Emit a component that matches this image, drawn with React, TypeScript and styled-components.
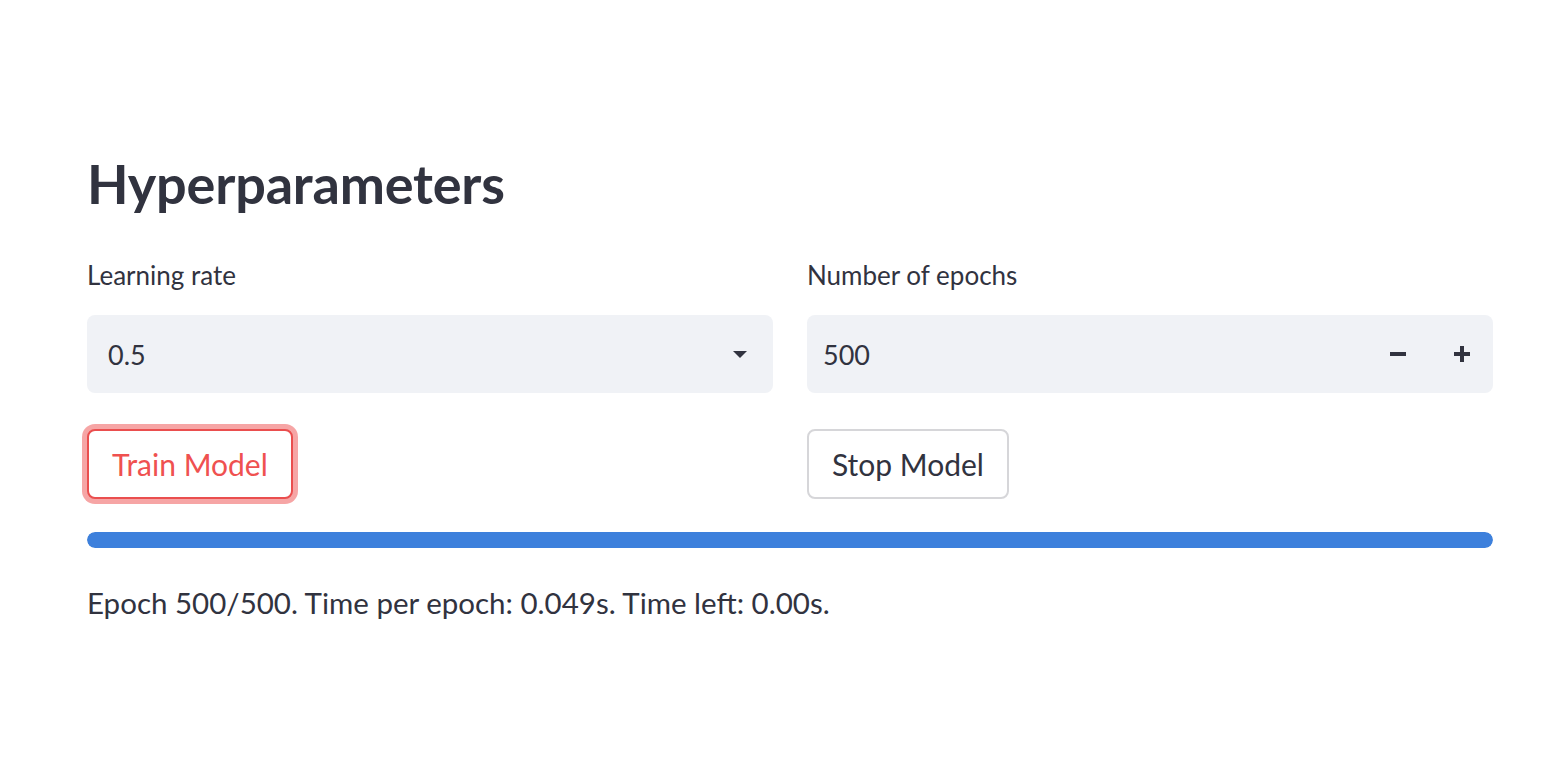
import React from "react";
import styled, { createGlobalStyle } from "styled-components";

const Global = createGlobalStyle`
  html, body { margin: 0; padding: 0; background: #ffffff; }
  body { font-family: Lato, "Noto Sans", sans-serif; color: #31333f; }
  * { box-sizing: border-box; }
`;

const Page = styled.main`
  width: 1566px;
  height: 762px;
  padding: 152px 73px 0 87px;
`;

const Heading = styled.h3`
  margin: 0;
  font-size: 54px;
  font-weight: 700;
  line-height: 64px;
  color: #31333f;
  letter-spacing: -0.2px;
`;

const Columns = styled.div`
  display: grid;
  grid-template-columns: 686px 686px;
  column-gap: 34px;
  margin-top: 43px;
`;

const Field = styled.div`
  display: flex;
  flex-direction: column;
`;

const Label = styled.label`
  font-size: 26px;
  line-height: 32px;
  height: 32px;
  margin-bottom: 24px;
  color: #31333f;
`;

const InputBox = styled.div<{ $padLeft: number; $padRight: number }>`
  height: 78px;
  background: #f0f2f6;
  border-radius: 8px;
  display: flex;
  align-items: center;
  padding-left: ${(p) => p.$padLeft}px;
  padding-right: ${(p) => p.$padRight}px;
  font-size: 27px;
  color: #31333f;
`;

const Value = styled.span`
  flex: 1;
`;

const Caret = styled.span`
  width: 0;
  height: 0;
  border-left: 7px solid transparent;
  border-right: 7px solid transparent;
  border-top: 7px solid #31333f;
`;

const StepButton = styled.span`
  width: 16px;
  height: 16px;
  display: flex;
  align-items: center;
  justify-content: center;
  margin-left: 48px;
`;

const ButtonRow = styled.div`
  margin-top: 36px;
  height: 70px;
`;

const Button = styled.button<{ $primary?: boolean }>`
  height: 70px;
  padding: 0 23px;
  border-radius: 8px;
  background: #ffffff;
  font-family: inherit;
  font-size: 30px;
  cursor: pointer;
  color: ${(p) => (p.$primary ? "#ef5150" : "#31333f")};
  border: ${(p) => (p.$primary ? "2px solid #ea4e4e" : "2px solid #d6d6d9")};
  box-shadow: ${(p) => (p.$primary ? "0 0 0 5px rgba(245, 160, 160, 0.95)" : "none")};
`;

const Progress = styled.div`
  margin-top: 33px;
  height: 16px;
  width: 1406px;
  border-radius: 8px;
  background: #f0f2f6;
  overflow: hidden;
`;

const ProgressFill = styled.div`
  height: 100%;
  background: #3d80dc;
  border-radius: 8px;
`;

const Status = styled.p`
  margin: 35px 0 0;
  font-size: 29.5px;
  line-height: 40px;
  color: #31333f;
`;

export default function App() {
  const pct = 100;
  return (
    <>
      <Global />
      <Page>
        <Heading>Hyperparameters</Heading>
        <Columns>
          <Field>
            <Label>Learning rate</Label>
            <InputBox $padLeft={21} $padRight={26}>
              <Value>0.5</Value>
              <Caret />
            </InputBox>
            <ButtonRow>
              <Button $primary>Train Model</Button>
            </ButtonRow>
          </Field>
          <Field>
            <Label>Number of epochs</Label>
            <InputBox $padLeft={16} $padRight={23}>
              <Value>500</Value>
              <StepButton>
                <svg width="16" height="16" viewBox="0 0 16 16">
                  <rect x="0" y="6" width="16" height="4" fill="#31333f" />
                </svg>
              </StepButton>
              <StepButton>
                <svg width="16" height="16" viewBox="0 0 16 16">
                  <rect x="0" y="6" width="16" height="4" fill="#31333f" />
                  <rect x="6" y="0" width="4" height="16" fill="#31333f" />
                </svg>
              </StepButton>
            </InputBox>
            <ButtonRow>
              <Button>Stop Model</Button>
            </ButtonRow>
          </Field>
        </Columns>
        <Progress>
          <ProgressFill style={{ width: `${pct}%` }} />
        </Progress>
        <Status>Epoch 500/500. Time per epoch: 0.049s. Time left: 0.00s.</Status>
      </Page>
    </>
  );
}
